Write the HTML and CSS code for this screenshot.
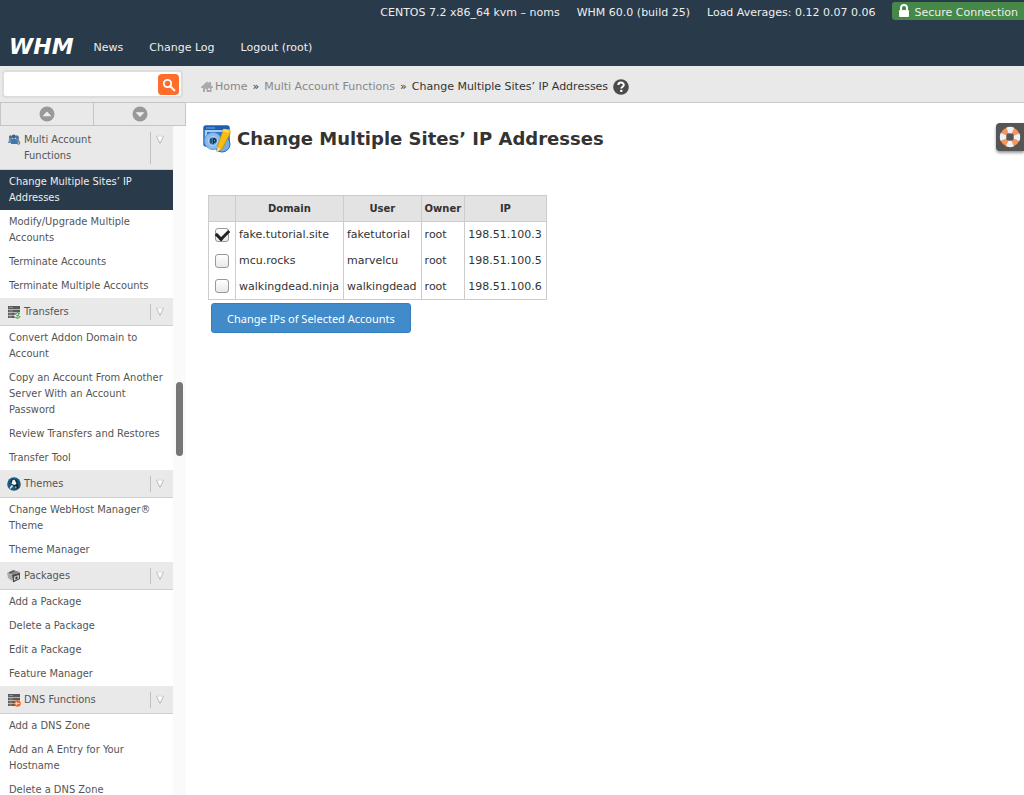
FILE: index.html
```html
<!DOCTYPE html>
<html lang="en">
<head>
<meta charset="utf-8">
<title>WHM - Change Multiple Sites’ IP Addresses</title>
<meta name="viewport" content="width=device-width, initial-scale=1">
<link rel="stylesheet" href="styles.css">
</head>
<body>
<svg width="0" height="0" class="defs" aria-hidden="true">
  <symbol id="chev" viewBox="0 0 10 10"><path d="M1.5 1h7L5 8.500z" fill="#fff" stroke="#bbb"/><path d="M2 1h6" stroke="#f4f4f4"/></symbol>
  <symbol id="rack" viewBox="0 0 14 14"><path d="M1 1h12v12H1z" fill="#999"/><path d="M1 1h12v3H1zM1 5h12v2H1zM1 8h12v2H1zM1 11h12v2H1z" fill="#5a5a5a"/><path d="M1 4.500h12M1 7.500h12M1 10.500h12" stroke="#bbb" stroke-width=".8"/><path d="M2 2.500h4M2 6h4M2 9h3M2 12h3" stroke="#aaa" stroke-width=".7"/></symbol>
</svg>
<header class="top">
  <div class="status">
    <span>CENTOS 7.2 x86_64 kvm – noms</span>
    <span>WHM 60.0 (build 25)</span>
    <span>Load Averages: 0.12 0.07 0.06</span>
    <span class="secure"><svg width="12" height="14" viewBox="0 0 12 14" aria-hidden="true"><path d="M3 6V4a3 3 0 0 1 6 0v2" fill="none" stroke="#fff" stroke-width="2"/><rect x="1" y="6" width="10" height="7" rx="1" fill="#fff"/></svg><span>Secure Connection</span></span>
  </div>
  <nav class="mainnav" aria-label="Main">
    <a class="logo" href="#">WHM</a>
    <a href="#">News</a><a href="#">Change Log</a><a href="#">Logout (root)</a>
  </nav>
</header>
<div class="body">
  <aside class="side">
    <form class="search">
      <input type="search" aria-label="Search">
      <button type="button" aria-label="Search"><svg width="14" height="14" viewBox="0 0 14 14"><circle cx="5.500" cy="5.500" r="3.700" fill="none" stroke="#fff" stroke-width="1.800"/><path d="M8.300 8.300l4 4" stroke="#fff" stroke-width="2.200" stroke-linecap="round"/></svg></button>
    </form>
    <div class="arrows">
      <button type="button" aria-label="Collapse all"><svg width="16" height="16" viewBox="0 0 16 16"><circle cx="8" cy="8" r="7.500" fill="#999"/><path d="M3.500 10.300L8 5.500l4.500 4.800z" fill="#eee"/></svg></button>
      <button type="button" aria-label="Expand all"><svg width="16" height="16" viewBox="0 0 16 16"><circle cx="8" cy="8" r="7.500" fill="#999"/><path d="M3.500 6.200h9L8 11z" fill="#eee"/></svg></button>
    </div>
    <div class="scroller">
      <nav class="menu" aria-label="Functions">
        <h2><svg class="ic" viewBox="0 0 14 14"><path d="M1 10l1-3V4l2-1 1 1v6zM13 10l-1-3V4l-2-1-1 1v6z" fill="#6a8cad"/><circle cx="3.500" cy="3.800" r="1.600" fill="#51708d"/><circle cx="10" cy="3.800" r="1.600" fill="#51708d"/><circle cx="6.800" cy="3.600" r="2" fill="#36618b"/><path d="M4 11V7l2-1.500h2L10 7v4z" fill="#3e78ad"/><circle cx="11.500" cy="10" r="1.800" fill="#777"/><circle cx="11.500" cy="10" r=".7" fill="#ddd"/></svg><span>Multi Account Functions</span><button type="button" aria-label="Toggle Multi Account Functions"><svg><use href="#chev"/></svg></button></h2>
        <ul>
          <li class="on"><a href="#">Change Multiple Sites’ IP Addresses</a></li>
          <li><a href="#">Modify/Upgrade Multiple Accounts</a></li>
          <li><a href="#">Terminate Accounts</a></li>
          <li><a href="#">Terminate Multiple Accounts</a></li>
        </ul>
        <h2><svg class="ic" viewBox="0 0 14 14"><use href="#rack" width="14" height="14"/><circle cx="10.500" cy="10.500" r="3.200" fill="#dfeedd"/><path d="M8 10a2.600 2.600 0 0 1 4.500-1.200M13 11a2.600 2.600 0 0 1-4.500 1.200M9.500 10l1 1 1.500-1.500" stroke="#4c9e45" stroke-width="1.200" fill="none"/></svg><span>Transfers</span><button type="button" aria-label="Toggle Transfers"><svg><use href="#chev"/></svg></button></h2>
        <ul>
          <li><a href="#">Convert Addon Domain to Account</a></li>
          <li><a href="#">Copy an Account From Another Server With an Account Password</a></li>
          <li><a href="#">Review Transfers and Restores</a></li>
          <li><a href="#">Transfer Tool</a></li>
        </ul>
        <h2><svg class="ic" viewBox="0 0 14 14"><circle cx="7" cy="7" r="6.800" fill="#175a86"/><path d="M3.500 5c0-4 7-4 7 0l1 3-2 2-5-1z" fill="#102f40"/><path d="M5.500 3.200L7.500 2.500 9.500 6.500 8 8 4.500 7z" fill="#f4f4f4"/><path d="M4.500 8L2.500 11l1 1L6.500 9z" fill="#ddd"/><path d="M8 9l2 3 2-2-2-3z" fill="#222"/><circle cx="8.700" cy="10.200" r=".9" fill="#8cb33a"/></svg><span>Themes</span><button type="button" aria-label="Toggle Themes"><svg><use href="#chev"/></svg></button></h2>
        <ul>
          <li><a href="#">Change WebHost Manager® Theme</a></li>
          <li><a href="#">Theme Manager</a></li>
        </ul>
        <h2><svg class="ic" viewBox="0 0 14 14"><path d="M0 4l6-3 7 2-7 3z" fill="#888"/><path d="M2 3.500l5-2 1 .5-5 2.500z" fill="#33506b"/><path d="M0 4l5 2v6L1 9z" fill="#aaa"/><path d="M5 6l8-2.500V10l-7 3.500z" fill="#4b4b4b"/><path d="M7 7.500l5-1.500v3.500l-5 2z" fill="#ccc"/><path d="M8.500 8l2-.6v2l-2 .8z" fill="#333"/></svg><span>Packages</span><button type="button" aria-label="Toggle Packages"><svg><use href="#chev"/></svg></button></h2>
        <ul>
          <li><a href="#">Add a Package</a></li>
          <li><a href="#">Delete a Package</a></li>
          <li><a href="#">Edit a Package</a></li>
          <li><a href="#">Feature Manager</a></li>
        </ul>
        <h2><svg class="ic" viewBox="0 0 14 14"><use href="#rack" width="14" height="14"/><circle cx="10.500" cy="10.500" r="3.300" fill="#f4682a"/><path d="M8.500 10.500h4M10 9l-1.500 1.500L10 12" stroke="#ffd9c4" fill="none"/></svg><span>DNS Functions</span><button type="button" aria-label="Toggle DNS Functions"><svg><use href="#chev"/></svg></button></h2>
        <ul>
          <li><a href="#">Add a DNS Zone</a></li>
          <li><a href="#">Add an A Entry for Your Hostname</a></li>
          <li><a href="#">Delete a DNS Zone</a></li>
        </ul>
      </nav>
      <div class="track"><div class="thumb"></div></div>
    </div>
  </aside>
  <main>
    <nav class="crumbs" aria-label="Breadcrumb">
      <svg width="12" height="12" viewBox="0 0 12 12" aria-hidden="true"><path d="M0 6l6-5.500L8 2V1h2v3l2 2v1H0z" fill="#aaa"/><path d="M2 6h8.500v5H2z" fill="#aaa"/><path d="M4 8h1.500v3H4zM7 7.500h2V9H7z" fill="#eee"/></svg>
      <a href="#">Home</a><span>»</span><a href="#">Multi Account Functions</a><span>»</span><span>Change Multiple Sites’ IP Addresses</span>
      <button type="button" aria-label="Help"><svg width="16" height="16" viewBox="0 0 16 16"><circle cx="8" cy="8" r="7.800" fill="#4b4b4b"/><path d="M5.300 6c.1-3.400 5.600-3.200 5.500 0 0 1.700-2.500 1.700-2.500 3.600" fill="none" stroke="#fff" stroke-width="2"/><rect x="7.200" y="10.800" width="2.200" height="2.200" fill="#fff"/></svg></button>
    </nav>
    <button type="button" class="support" aria-label="Support"><svg width="22" height="22" viewBox="0 0 22 22"><circle cx="11" cy="11" r="7" fill="none" stroke="#f7965c" stroke-width="6"/><circle cx="11" cy="11" r="7" fill="none" stroke="#e9f1fa" stroke-width="6.400" stroke-dasharray="5.500 5.500" stroke-dashoffset="2.750"/></svg></button>
    <section class="content">
      <h1><svg width="28" height="28" viewBox="0 0 28 28" aria-hidden="true"><rect x="1" y="1" width="25" height="20" rx="2" fill="#a9cdf0" stroke="#1d62b5" stroke-width="1.500"/><path d="M1 1h25v4H1z" fill="#1b5fb4"/><path d="M3 3h9" stroke="#72aee9"/><rect x="4" y="7" width="21" height="4" fill="#2d74c2"/><circle cx="19" cy="19" r="8" fill="#77ade3" stroke="#2d6bb4"/><circle cx="10" cy="16" r="8.500" fill="#8dbcec" stroke="#5a94d3"/><circle cx="10" cy="16" r="4.500" fill="#5f98cd" stroke="#b9dbf6"/><path d="M8 13.500v5M10.300 19v-5h1.200a1.500 1.500 0 0 1 0 3h-1.200" stroke="#102c48" stroke-width="1.300" fill="none"/><path d="M20.500 4l6.500 1v4l-8 15-5 3 .5-6z" fill="#f7bd13" stroke="#ba870c" stroke-width=".7"/><path d="M20.500 4l6.500 1-1.500 3-6-1.500z" fill="#ffd84b"/><path d="M14.500 22l3 2-3.500 3z" fill="#f4dfb0"/></svg>Change Multiple Sites’ IP Addresses</h1>
      <form>
        <table>
          <thead><tr><th></th><th scope="col">Domain</th><th scope="col">User</th><th scope="col">Owner</th><th scope="col">IP</th></tr></thead>
          <tbody>
            <tr><td><input type="checkbox" id="a" checked></td><td><label for="a">fake.tutorial.site</label></td><td>faketutorial</td><td>root</td><td>198.51.100.3</td></tr>
            <tr><td><input type="checkbox" id="b"></td><td><label for="b">mcu.rocks</label></td><td>marvelcu</td><td>root</td><td>198.51.100.5</td></tr>
            <tr><td><input type="checkbox" id="c"></td><td><label for="c">walkingdead.ninja</label></td><td>walkingdead</td><td>root</td><td>198.51.100.6</td></tr>
          </tbody>
        </table>
        <button type="button" class="primary">Change IPs of Selected Accounts</button>
      </form>
    </section>
  </main>
</div>
</body>
</html>
```
FILE: styles.css
```css
* { box-sizing: border-box; }
html, body { height: 100%; }
body {
  margin: 0;
  display: flex;
  flex-direction: column;
  overflow: hidden;
  background: #fff;
  color: #333;
  font-family: "DejaVu Sans", sans-serif;
  font-size: 11px;
}
a { color: inherit; text-decoration: none; }
button { margin: 0; padding: 0; border: 0; background: none; font: inherit; color: inherit; }
svg { display: block; flex: none; }
.defs { position: absolute; }

.top { flex: none; background: #293a4a; color: #eee; }
.status { display: flex; justify-content: flex-end; gap: 17px; height: 26px; line-height: 26px; }
.secure {
  display: flex;
  align-items: center;
  gap: 4px;
  height: 18px;
  margin-top: 2px;
  padding: 0 6px;
  border-radius: 3px 0 0 3px;
  background: #468847;
  line-height: 18px;
}
.secure span { padding-top: 3px; }
.mainnav { display: flex; align-items: center; gap: 26px; height: 40px; padding: 2px 9px 0; }
.logo { margin-right: -6px; color: #fff; font-size: 22px; font-weight: bold; font-style: oblique; line-height: 24px; }

.body { flex: 1; display: flex; min-height: 0; }
.side { flex: none; display: flex; flex-direction: column; width: 186px; }
.search { display: flex; flex: none; padding: 4px 3px 4px 2px; height: 36px; background: #e9e9e9; }
.search input {
  flex: 1;
  min-width: 0;
  margin-right: -28px;
  padding: 0 32px 0 8px;
  border: 2px solid #ddd;
  border-radius: 4px;
  background: #fff;
  font: inherit;
}
.search button {
  display: grid;
  place-items: center;
  z-index: 1;
  width: 21px;
  height: 21px;
  margin: 4px 4px 0 3px;
  border-radius: 4px;
  background: #ff6c2c;
}
.arrows { flex: none; display: grid; grid-template-columns: 1fr 1fr; height: 24px; border: 1px solid #c5c5c5; background: #e9e9e9; }
.arrows button { display: grid; place-items: center; }
.arrows button + button { border-left: 1px solid #c5c5c5; }
.scroller { flex: 1; display: flex; min-height: 0; }
.menu {
  flex: 1;
  overflow: hidden;
  color: #555;
  font-family: "DejaVu Sans Condensed", "DejaVu Sans", sans-serif;
  font-stretch: condensed;
  line-height: 16px;
}
.menu h2 {
  display: flex;
  align-items: flex-start;
  gap: 3px;
  margin: 0;
  padding: 6px 7px 5px;
  border-bottom: 1px solid #d0d0d0;
  background: #e9e9e9;
  font-size: 11px;
  font-weight: normal;
}
.menu h2 span { flex: 1; padding-right: 24px; }
.menu h2 button {
  display: flex;
  align-items: flex-start;
  align-self: stretch;
  width: 16px;
  padding: 3px 0 0 4px;
  border-left: 1px solid #c0c0c0;
}
.menu h2 button svg { width: 10px; height: 10px; }
.ic { width: 14px; height: 14px; margin-top: 1px; }
.menu ul { margin: 0; padding: 0; list-style: none; }
.menu a { display: block; padding: 4px 0 4px 9px; }
.on { background: #293a4a; color: #eee; }
.track { flex: none; width: 13px; background: #fafafa; }
.thumb { width: 7px; height: 74px; margin: 256px 0 0 3px; border-radius: 4px; background: #777; }

main { flex: 1; position: relative; min-width: 0; }
.crumbs {
  display: flex;
  align-items: center;
  gap: 5px;
  height: 37px;
  padding: 5px 15px 0;
  border-bottom: 1px solid #ccc;
  background: #e9e9e9;
}
.crumbs > svg { margin-right: -3px; }
.crumbs a { color: #888; }
.support {
  position: absolute;
  top: 57px;
  right: 0;
  padding: 3px;
  border-radius: 4px 0 0 4px;
  background: #555;
  box-shadow: 0 2px 3px #999;
}
.content { padding: 21px 17px; }
h1 { display: flex; align-items: center; gap: 6px; margin: 0 0 41px; font-size: 18px; line-height: 30px; }
table { margin: 0 0 3px 5px; border: 1px solid #ccc; border-collapse: collapse; }
th, td { height: 26px; border: 1px solid #ccc; }
th { padding: 0 3px; background: #e3e3e3; font-size: 10px; }
td { padding: 0 4px 0 3px; border-width: 0 1px; white-space: nowrap; }
td:first-child { padding: 0 6px; }
td input {
  appearance: none;
  display: grid;
  place-items: center;
  width: 14px;
  height: 14px;
  margin: 0;
  border: 1px solid #999;
  border-radius: 3px;
  background: linear-gradient(#fff, #e8e8e8);
}
td input:checked::before {
  content: "";
  width: 10px;
  height: 6px;
  margin-bottom: 4px;
  border: solid #222;
  border-width: 0 0 3px 3px;
  transform: rotate(-45deg);
}
.primary {
  height: 30px;
  margin-left: 8px;
  padding: 0 15px;
  border: 1px solid #357ebd;
  border-radius: 3px;
  background: #428bca;
  color: #fff;
  font-family: "Noto Sans", sans-serif;
  font-size: 11px;
}
```
